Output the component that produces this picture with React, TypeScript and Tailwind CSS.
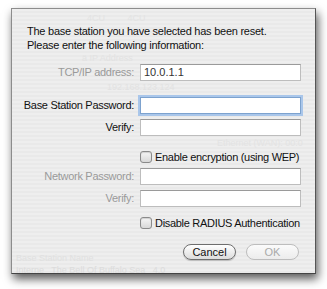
import React from "react";

const font = { fontFamily: '"Liberation Sans", Arial, sans-serif' };

function Field({ label, value, dim, focus }: { label: string; value?: string; dim?: boolean; focus?: boolean }) {
  return (
    <div className="flex items-center h-[17px]">
      <div className={`w-[122px] shrink-0 whitespace-nowrap text-right text-[11px] leading-[17px] tracking-[-0.3px] ${dim ? "text-[#9a9a9a]" : "text-[#111]"}`}>{label}</div>
      <div
        className={`ml-[6px] w-[161px] h-[17px] bg-white border text-[11px] leading-[15px] pl-[3px] text-[#333] ${
          focus
            ? "border-[#7da2ce] shadow-[0_0_0_2px_#a9c6ea]"
            : "border-[#bdbdbd] border-t-[#9a9a9a]"
        }`}
      >
        {value}
      </div>
    </div>
  );
}

function Check({ label }: { label: string }) {
  return (
    <div className="flex items-center h-[14px] pl-[128px]">
      <div className="w-[12px] h-[12px] shrink-0 rounded-[3px] border border-[#8a8a8a] bg-gradient-to-b from-[#f6f6f6] to-[#d8d8d8] shadow-[inset_0_1px_1px_rgba(0,0,0,0.15)]" />
      <div className="ml-[3px] whitespace-nowrap text-[11px] leading-[14px] tracking-[-0.3px] text-[#111]">{label}</div>
    </div>
  );
}

export default function App() {
  return (
    <div className="w-[327px] h-[289px] bg-white pl-[11px] pt-[8px]" style={font}>
      <div className="relative w-[305px] h-[266px] border border-[#8c8c8c] border-r-[#555] border-b-[#444] bg-[#ececec] bg-[repeating-linear-gradient(to_bottom,#eeeeee_0px,#eeeeee_2px,#e9e9e9_2px,#e9e9e9_4px)] shadow-[2px_5px_9px_rgba(0,0,0,0.65)] overflow-hidden">
        {/* faint background ghosts */}
        <div className="absolute left-[75px] top-[4px] whitespace-nowrap text-[9px] leading-[10px] text-[#e3e3e3]">4CU &nbsp;&nbsp;&nbsp;&nbsp;&nbsp;&nbsp;&nbsp; 4CU</div>
        <div className="absolute left-[70px] top-[44px] whitespace-nowrap text-[9px] leading-[10px] text-[#e2e2e2]">ä IP Address</div>
        <div className="absolute left-[95px] top-[73px] whitespace-nowrap text-[9px] leading-[10px] text-[#e2e2e2]">192.168.123.124</div>
        <div className="absolute left-[205px] top-[129px] whitespace-nowrap text-[9px] leading-[10px] text-[#e3e3e3]">Ethernet (WAN): 00:0</div>
        <div className="absolute left-[4px] top-[244px] whitespace-nowrap text-[9px] leading-[10px] text-[#e0e0e0]">Base Station Name</div>
        <div className="absolute left-[4px] top-[256px] whitespace-nowrap text-[9px] leading-[10px] text-[#dcdcdc]">Interne &nbsp; The Bell Of Buffalo Sea &nbsp; 4.0</div>

        <div className="relative">
          <div className="pt-[15px] pl-[15px] text-[11px] leading-[14px] tracking-[-0.25px] text-[#111] whitespace-nowrap">
            <div>The base station you have selected has been reset.</div>
            <div>Please enter the following information:</div>
          </div>
          <div className="mt-[12px]">
            <Field label="TCP/IP address:" value="10.0.1.1" dim />
          </div>
          <div className="mt-[16px]">
            <Field label="Base Station Password:" focus />
          </div>
          <div className="mt-[5px]">
            <Field label="Verify:" />
          </div>
          <div className="mt-[14px]">
            <Check label="Enable encryption (using WEP)" />
          </div>
          <div className="mt-[4px]">
            <Field label="Network Password:" dim />
          </div>
          <div className="mt-[5px]">
            <Field label="Verify:" dim />
          </div>
          <div className="mt-[9px]">
            <Check label="Disable RADIUS Authentication" />
          </div>
          <div className="mt-[14px] flex pl-[171px] gap-[10px]">
            <div className="w-[53px] h-[16px] rounded-full border border-[#6e6e6e] bg-gradient-to-b from-[#ffffff] to-[#dcdcdc] text-[11px] leading-[14px] text-center text-[#111] shadow-[0_1px_1px_rgba(0,0,0,0.2)]">Cancel</div>
            <div className="w-[53px] h-[16px] rounded-full border border-[#bdbdbd] bg-gradient-to-b from-[#fbfbfb] to-[#ececec] text-[11px] leading-[14px] text-center text-[#aaa]">OK</div>
          </div>
        </div>
      </div>
    </div>
  );
}
